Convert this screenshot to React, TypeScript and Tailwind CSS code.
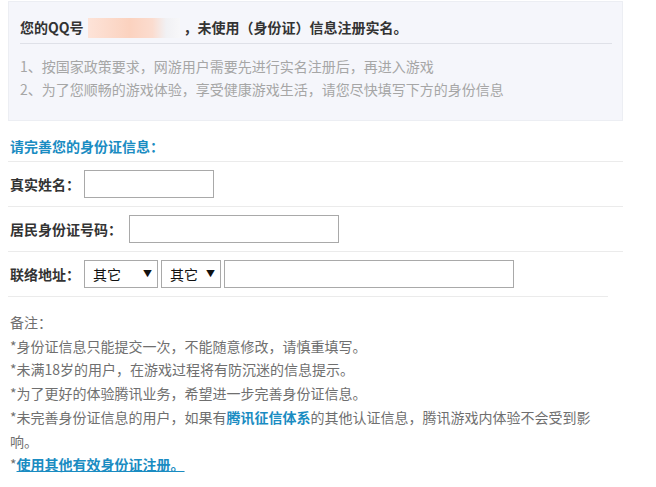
import React from "react";

const font = "font-['SimSun','Noto_Sans_CJK_SC','Liberation_Sans',sans-serif]";

const Row = ({ label, children }: { label: string; children: React.ReactNode }) => (
  <div className="flex h-[45px] items-center border-b border-[#ebebeb] pl-[2px]">
    <span className="text-[14px] font-bold text-[#333]">{label}</span>
    {children}
  </div>
);

const Select = ({ w }: { w: string }) => (
  <div className={`flex h-[28px] ${w} items-center justify-between border border-[#a9a9a9] bg-white pl-[8px] pr-[5px] text-[14px] text-[#111]`}>
    <span>其它</span>
    <span className="text-[9px]">▼</span>
  </div>
);

export default function App() {
  return (
    <div className={`h-[487px] w-[656px] overflow-hidden bg-white ${font}`}>
      {/* notice box */}
      <div className="ml-[8px] mt-px h-[120px] w-[615px] border border-[#eceef3] bg-[#f5f6fb] pl-[11px] pr-[10px] pt-[17px]">
        <div className="flex h-[25px] items-center border-b border-[#dfe1e8] pb-[7px] text-[14px] font-bold text-[#333]">
          <span>您的QQ号</span>
          <span className="mx-[4px] h-[20px] w-[92px] bg-[linear-gradient(90deg,#fde3d8_0%,#fbd2bf_45%,#fbdccf_70%,#f1f1f4_85%,#f7f7f9_100%)]" />
          <span>，未使用（身份证）信息注册实名。</span>
        </div>
        <div className="mt-[11px] text-[14px] leading-[23px] text-[#a6a6a6]">
          <p>1、按国家政策要求，网游用户需要先进行实名注册后，再进入游戏</p>
          <p>2、为了您顺畅的游戏体验，享受健康游戏生活，请您尽快填写下方的身份信息</p>
        </div>
      </div>

      {/* form */}
      <div className="ml-[8px] w-[615px]">
        <div className="flex h-[41px] items-end border-b border-[#ebebeb] pb-[4px] pl-[2px] text-[14px] font-bold text-[#1a8cc2]">
          请完善您的身份证信息：
        </div>
        <Row label="真实姓名：">
          <input className="ml-[4px] h-[28px] w-[130px] border border-[#a9a9a9] bg-white outline-none" />
        </Row>
        <Row label="居民身份证号码：">
          <input className="ml-[7px] h-[28px] w-[210px] border border-[#a9a9a9] bg-white outline-none" />
        </Row>
        <div className="w-[600px]">
          <Row label="联络地址：">
            <div className="ml-[4px] flex gap-[3px]">
              <Select w="w-[74px]" />
              <Select w="w-[60px]" />
              <input className="h-[28px] w-[290px] border border-[#a9a9a9] bg-white outline-none" />
            </div>
          </Row>
        </div>
      </div>

      {/* notes */}
      <div className="ml-[10px] mt-[14px] w-[600px] text-[14px] leading-[23.7px] text-[#6f6f6f]">
        <p>备注：</p>
        <p>*身份证信息只能提交一次，不能随意修改，请慎重填写。</p>
        <p>*未满18岁的用户，在游戏过程将有防沉迷的信息提示。</p>
        <p>*为了更好的体验腾讯业务，希望进一步完善身份证信息。</p>
        <p>
          *未完善身份证信息的用户，如果有<b className="text-[#1a8cc2]">腾讯征信体系</b>的其他认证信息，腾讯游戏内体验不会受到影响。
        </p>
        <p>
          *<a className="font-bold text-[#1a8cc2] underline">使用其他有效身份证注册。</a>
        </p>
      </div>
    </div>
  );
}
